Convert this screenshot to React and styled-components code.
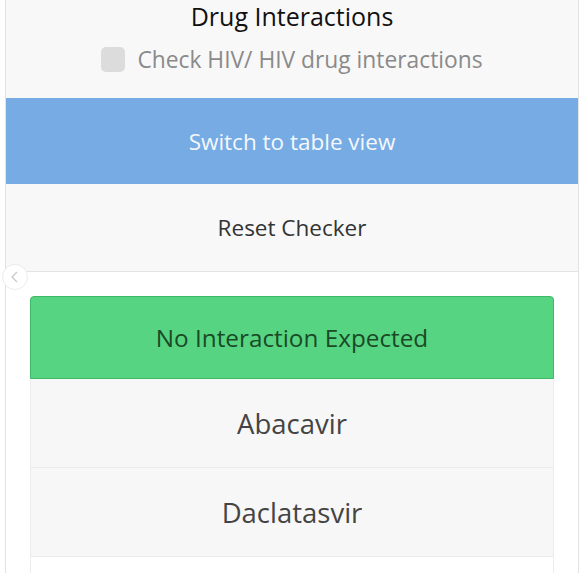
import React, { useState } from 'react';
import styled, { createGlobalStyle } from 'styled-components';

const GlobalStyle = createGlobalStyle`
  html, body {
    margin: 0;
    padding: 0;
    background: #ffffff;
    font-family: "Open Sans", "Noto Sans", sans-serif;
  }
`;

const drugs = ['Abacavir', 'Daclatasvir', ''];

const App = () => {
  const [checked, setChecked] = useState(false);

  return (
    <>
      <GlobalStyle />
      <Page>
        <Panel>
          <Header>
            <Title>Drug Interactions</Title>
            <CheckRow>
              <CheckBox $checked={checked} onClick={() => setChecked(!checked)} />
              <CheckLabel>Check HIV/ HIV drug interactions</CheckLabel>
            </CheckRow>
          </Header>
          <PrimaryButton>Switch to table view</PrimaryButton>
          <SecondaryButton>Reset Checker</SecondaryButton>
          <Results>
            <BackButton>
              <svg width="10" height="12" viewBox="0 0 10 12">
                <path d="M7 1 L2 6 L7 11" fill="none" stroke="#c8c8c8" strokeWidth="1.3" />
              </svg>
            </BackButton>
            <ResultCard>
              <StatusBanner>No Interaction Expected</StatusBanner>
              {drugs.map((name, i) => (
                <DrugRow key={i}>{name}</DrugRow>
              ))}
            </ResultCard>
          </Results>
        </Panel>
      </Page>
    </>
  );
};

const Page = styled.div`
  height: 573px;
  overflow: hidden;
  padding: 0 8px 0 5px;
`;

const Panel = styled.div`
  border-left: 1px solid #e2e2e2;
  border-right: 1px solid #e2e2e2;
  display: flex;
  flex-direction: column;
`;

const Header = styled.div`
  background: #f8f8f8;
  display: flex;
  flex-direction: column;
  align-items: center;
  padding-top: 2px;
  height: 96px;
`;

const Title = styled.div`
  font-size: 25px;
  color: #111;
  line-height: 28px;
`;

const CheckRow = styled.div`
  display: flex;
  align-items: center;
  gap: 12px;
  margin-top: 14px;
`;

const CheckBox = styled.div`
  width: 24px;
  height: 25px;
  border-radius: 5px;
  background: ${(p) => (p.$checked ? '#76aee6' : '#dcdcdc')};
  cursor: pointer;
`;

const CheckLabel = styled.span`
  font-size: 22.8px;
  color: #8a8a8a;
`;

const PrimaryButton = styled.div`
  height: 86px;
  background: #76abe4;
  color: #f4f8fd;
  font-size: 22.5px;
  display: flex;
  align-items: center;
  justify-content: center;
`;

const SecondaryButton = styled.div`
  height: 87px;
  background: #f8f8f8;
  border-bottom: 1px solid #e4e4e4;
  color: #333;
  font-size: 22.5px;
  display: flex;
  align-items: center;
  justify-content: center;
`;

const Results = styled.div`
  position: relative;
  background: #fff;
  padding: 24px 24px 0 24px;
`;

const BackButton = styled.div`
  position: absolute;
  left: -4px;
  top: -8px;
  width: 24px;
  height: 24px;
  border-radius: 50%;
  background: #fff;
  border: 1px solid #ececec;
  display: flex;
  align-items: center;
  justify-content: center;
`;

const ResultCard = styled.div`
  display: flex;
  flex-direction: column;
`;

const StatusBanner = styled.div`
  height: 81px;
  background: #57d482;
  border: 1px solid #3db866;
  border-radius: 4px 4px 0 0;
  color: #1a4a26;
  font-size: 24.3px;
  display: flex;
  align-items: center;
  justify-content: center;
`;

const DrugRow = styled.div`
  height: 88px;
  background: #f7f7f7;
  border: 1px solid #ececec;
  border-top: none;
  color: #444;
  font-size: 27.5px;
  display: flex;
  align-items: center;
  justify-content: center;

  &:last-child {
    background: #fff;
  }
`;

export default App;
